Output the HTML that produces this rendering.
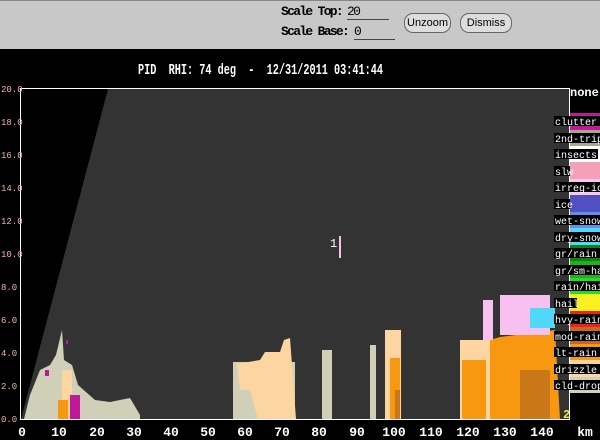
<!DOCTYPE html>
<html><head><style>
html,body{margin:0;padding:0;width:600px;height:440px;overflow:hidden;background:#000;}
.top{position:absolute;left:0;top:0;width:600px;height:48px;background:#c8c8c8;border-top:1px solid #888;}
.t{position:absolute;font-family:"Liberation Mono",monospace;font-weight:bold;font-size:13px;letter-spacing:-1.7px;color:#000;}
.btn{position:absolute;top:12px;height:18px;border:1px solid #666;border-radius:9px;background:#ddd;font-family:"Liberation Sans",sans-serif;font-size:11px;line-height:18px;text-align:center;}
.u{position:absolute;height:1px;background:#444;}
</style></head><body>
<div class="top">
<div class="t" style="left:281px;top:3px">Scale Top:</div>
<div class="t" style="left:347px;top:3px;font-weight:normal">20</div>
<div class="u" style="left:347px;top:18px;width:42px"></div>
<div class="t" style="left:281px;top:23px">Scale Base:</div>
<div class="t" style="left:354px;top:23px;font-weight:normal">0</div>
<div class="u" style="left:354px;top:38px;width:41px"></div>
<div class="btn" style="left:404px;width:45px">Unzoom</div>
<div class="btn" style="left:460px;width:50px">Dismiss</div>
</div>
<svg width="600" height="440" style="position:absolute;left:0;top:0" font-family="Liberation Mono, monospace">
<text x="138" y="74" fill="#fff" font-size="15" font-weight="bold" textLength="245" lengthAdjust="spacingAndGlyphs" xml:space="preserve">PID  RHI: 74 deg  -  12/31/2011 03:41:44</text>
<rect x="21" y="89" width="548" height="330" fill="#333"/>
<polygon points="21,419 21,89 108,89" fill="#000"/>
<g fill="#d0d0b8">
<polygon points="24,419 30,395 40,370 50,365 56,355 62,330 64,360 72,365 78,385 95,400 110,402 130,398 140,415 140,419"/>
<rect x="233" y="362" width="62" height="57"/>
<rect x="322" y="350" width="10" height="69"/>
<rect x="370" y="345" width="6" height="74"/>
</g>
<g fill="#fdd5a0">
<polygon points="237,364 260,360 265,352 280,352 284,340 290,338 296,419 258,419 250,390 240,390"/>
<rect x="385" y="330" width="16" height="89"/>
<rect x="460" y="340" width="30" height="79"/>
<rect x="62" y="370" width="10" height="49"/>
</g>
<g fill="#f89810">
<polygon points="490,340 500,337 555,330 560,419 490,419"/>
<rect x="390" y="358" width="10" height="61"/>
<rect x="462" y="360" width="24" height="59"/>
<rect x="58" y="400" width="10" height="19"/>
</g>
<g fill="#c87818"><rect x="520" y="370" width="30" height="49"/><rect x="395" y="390" width="5" height="29"/></g>
<g fill="#f8c0f0"><rect x="483" y="300" width="10" height="40"/><rect x="500" y="295" width="50" height="40"/></g>
<rect x="530" y="308" width="25" height="20" fill="#50d8f8"/>
<g fill="#c0189a"><rect x="70" y="395" width="10" height="24"/><rect x="45" y="370" width="4" height="6"/><rect x="66" y="340" width="2" height="4"/></g>
<rect x="339" y="236" width="2" height="22" fill="#f8c0f0"/>
<text x="330" y="247" fill="#fff" font-size="12">1</text>
<text x="563" y="418" fill="#f0f020" font-size="12" font-weight="bold">2</text>
<line x1="20.5" y1="89" x2="20.5" y2="420" stroke="#fff"/>
<line x1="20" y1="88.5" x2="569" y2="88.5" stroke="#fff"/>
<line x1="20" y1="419.5" x2="569" y2="419.5" stroke="#fff"/>
<line x1="569.5" y1="88" x2="569.5" y2="420" stroke="#fff"/>
<g fill="#f4b0b0" font-size="9">
<text x="1" y="92">20.0</text><text x="1" y="125">18.0</text><text x="1" y="158">16.0</text><text x="1" y="191">14.0</text><text x="1" y="224">12.0</text><text x="1" y="257">10.0</text><text x="1" y="290">8.0</text><text x="1" y="323">6.0</text><text x="1" y="356">4.0</text><text x="1" y="389">2.0</text><text x="1" y="422">0.0</text>
</g>
<g fill="#fff" font-size="13" font-weight="bold" text-anchor="middle">
<text x="22" y="436">0</text><text x="59" y="436">10</text><text x="97" y="436">20</text><text x="134" y="436">30</text><text x="171" y="436">40</text><text x="208" y="436">50</text><text x="245" y="436">60</text><text x="282" y="436">70</text><text x="319" y="436">80</text><text x="357" y="436">90</text><text x="394" y="436">100</text><text x="431" y="436">110</text><text x="468" y="436">120</text><text x="505" y="436">130</text><text x="542" y="436">140</text><text x="585" y="436">km</text>
</g>
<text x="570" y="96" fill="#fff" font-size="12" font-weight="bold">none</text>
<g>
<rect x="570" y="113" width="30" height="17" fill="#c0189a"/>
<rect x="570" y="130" width="30" height="16" fill="#a8a888"/>
<rect x="570" y="146" width="30" height="16" fill="#fff"/>
<rect x="570" y="162" width="30" height="17" fill="#f4a0b8"/>
<rect x="570" y="179" width="30" height="16" fill="#f8c8f0"/>
<rect x="570" y="195" width="30" height="17" fill="#5050c0"/>
<rect x="570" y="212" width="30" height="16" fill="#6090e8"/>
<rect x="570" y="228" width="30" height="17" fill="#50d8f8"/>
<rect x="570" y="245" width="30" height="16" fill="#108010"/>
<rect x="570" y="261" width="30" height="17" fill="#20b020"/>
<rect x="570" y="278" width="30" height="16" fill="#20e020"/>
<rect x="570" y="294" width="30" height="17" fill="#f8f020"/>
<rect x="570" y="311" width="30" height="16" fill="#f02020"/>
<rect x="570" y="327" width="30" height="17" fill="#c86818"/>
<rect x="570" y="344" width="30" height="16" fill="#f89810"/>
<rect x="570" y="360" width="30" height="17" fill="#fdd5a0"/>
<rect x="570" y="377" width="30" height="16" fill="#d0d0b8"/>
</g>
<g font-size="10" fill="#fff">
<g fill="#000"><rect x="554" y="116" width="46" height="10"/><rect x="554" y="133" width="46" height="10"/><rect x="554" y="149" width="44" height="10"/><rect x="554" y="166" width="16" height="10"/><rect x="554" y="182" width="46" height="10"/><rect x="554" y="199" width="16" height="10"/><rect x="554" y="215" width="46" height="10"/><rect x="554" y="232" width="46" height="10"/><rect x="554" y="248" width="46" height="10"/><rect x="554" y="265" width="46" height="10"/><rect x="554" y="281" width="46" height="10"/><rect x="554" y="298" width="23" height="10"/><rect x="554" y="314" width="46" height="10"/><rect x="554" y="331" width="46" height="10"/><rect x="554" y="347" width="46" height="10"/><rect x="554" y="364" width="46" height="10"/><rect x="554" y="380" width="46" height="10"/></g>
<text x="555" y="125">clutter</text><text x="555" y="142">2nd-trip</text><text x="555" y="158">insects</text><text x="555" y="175">slw</text><text x="555" y="191">irreg-ice</text><text x="555" y="208">ice</text><text x="555" y="224">wet-snow</text><text x="555" y="241">dry-snow</text><text x="555" y="257">gr/rain</text><text x="555" y="274">gr/sm-hail</text><text x="555" y="290">rain/hail</text><text x="555" y="307">hail</text><text x="555" y="323">hvy-rain</text><text x="555" y="340">mod-rain</text><text x="555" y="356">lt-rain</text><text x="555" y="373">drizzle</text><text x="555" y="389">cld-drop</text>
</g>
</svg>
</body></html>
